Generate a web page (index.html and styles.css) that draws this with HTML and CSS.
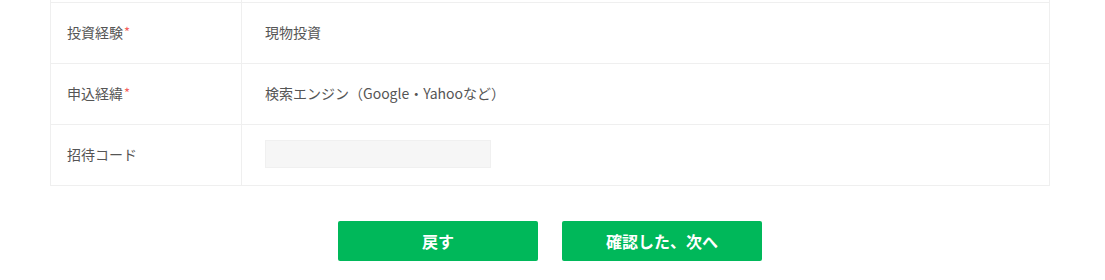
FILE: index.html
```html
<!DOCTYPE html>
<html lang="ja">
<head>
<meta charset="utf-8">
<title>確認</title>
<link rel="stylesheet" href="styles.css">
</head>
<body>
<div class="wrap">
  <div class="table">
    <div class="row">
      <div class="label"></div>
      <div class="value"></div>
    </div>
    <div class="row">
      <div class="label">投資経験<span class="req">*</span></div>
      <div class="value">現物投資</div>
    </div>
    <div class="row">
      <div class="label">申込経緯<span class="req">*</span></div>
      <div class="value">検索エンジン（Google・Yahooなど）</div>
    </div>
    <div class="row">
      <div class="label">招待コード</div>
      <div class="value"><div class="input"></div></div>
    </div>
  </div>
  <div class="actions">
    <button class="btn" type="button">戻す</button>
    <button class="btn" type="button">確認した、次へ</button>
  </div>
</div>
</body>
</html>
```
FILE: styles.css
```css
html, body {
  margin: 0;
  padding: 0;
  background: #fff;
}
body {
  font-family: "Noto Sans CJK JP", "Noto Sans", sans-serif;
  font-size: 14px;
  color: #555;
  overflow: hidden;
}
.wrap {
  width: 1000px;
  margin-left: 50px;
}
.table {
  margin-top: -59px;
  border-left: 1px solid #efefef;
  border-right: 1px solid #efefef;
  border-bottom: 1px solid #efefef;
}
.row {
  display: grid;
  grid-template-columns: 191px 1fr;
  height: 61px;
  box-sizing: border-box;
  border-top: 1px solid #efefef;
}
.label {
  border-right: 1px solid #efefef;
  padding-left: 16px;
  padding-bottom: 3px;
  display: flex;
  align-items: center;
  color: #555;
}
.value {
  padding-left: 23px;
  padding-bottom: 3px;
  display: flex;
  align-items: center;
  color: #555;
}
.req {
  color: #f4615d;
  font-size: 13px;
  line-height: 1;
  align-self: flex-start;
  margin-top: 22px;
  margin-left: 1px;
}
.input {
  width: 226px;
  height: 28px;
  box-sizing: border-box;
  background: #f6f6f6;
  border: 1px solid #f0f0f0;
  margin-top: 1px;
}
.actions {
  display: flex;
  justify-content: center;
  gap: 24px;
  margin-top: 35px;
}
.btn {
  width: 200px;
  height: 40px;
  border: none;
  border-radius: 2px;
  background: #00b85a;
  color: #fff;
  font-family: "Noto Sans CJK JP", "Noto Sans", sans-serif;
  font-size: 16px;
  font-weight: bold;
  padding: 0 0 1px;
  cursor: pointer;
}
```
